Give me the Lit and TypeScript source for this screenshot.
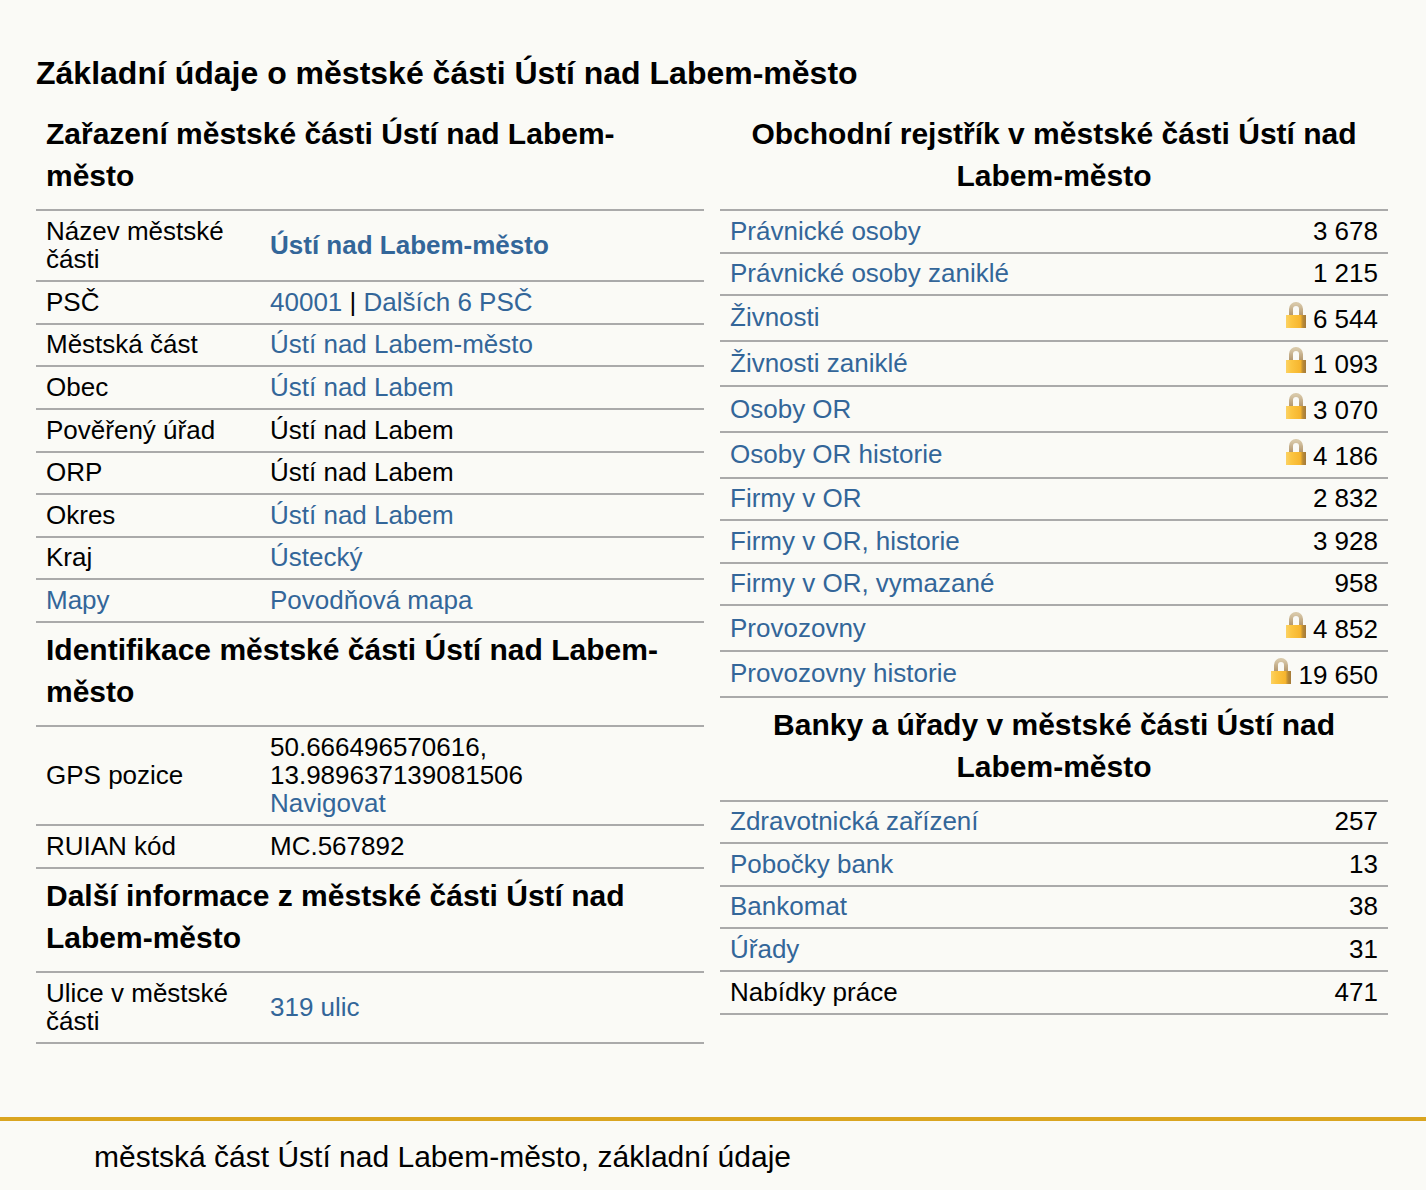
import { LitElement, html, css } from "lit";
import { customElement } from "lit/decorators.js";

const L = (t: string) => html`<a href="#">${t}</a>`;
const lock = html`<svg class="lock" viewBox="0 0 20 26" width="20" height="26" aria-hidden="true">
  <defs>
    <linearGradient id="g" x1="0" x2="1" y1="0" y2="0"><stop offset="0" stop-color="#fbd264"/><stop offset=".25" stop-color="#fcc642"/><stop offset=".72" stop-color="#f6b52e"/><stop offset=".85" stop-color="#b98a35"/><stop offset="1" stop-color="#a47a3a"/></linearGradient>
    <linearGradient id="s" x1="0" x2="0" y1="0" y2="1"><stop offset="0" stop-color="#d8c8a8"/><stop offset="1" stop-color="#b0936a"/></linearGradient>
  </defs>
  <path d="M5 14V7a5 5 0 0 1 10 0V14" fill="none" stroke="url(#s)" stroke-width="4"/>
  <rect x="0" y="13" width="20" height="13" fill="url(#g)"/></svg>`;

const left1: [any, any][] = [
  ["Název městské části", html`<a href="#"><b>Ústí nad Labem-město</b></a>`],
  ["PSČ", html`${L("40001")} | ${L("Dalších 6 PSČ")}`],
  ["Městská část", L("Ústí nad Labem-město")],
  ["Obec", L("Ústí nad Labem")],
  ["Pověřený úřad", "Ústí nad Labem"],
  ["ORP", "Ústí nad Labem"],
  ["Okres", L("Ústí nad Labem")],
  ["Kraj", L("Ústecký")],
  [L("Mapy"), L("Povodňová mapa")],
];
const left2: [any, any][] = [
  ["GPS pozice", html`50.666496570616, 13.989637139081506<br />${L("Navigovat")}`],
  ["RUIAN kód", "MC.567892"],
];
const left3: [any, any][] = [["Ulice v městské části", L("319 ulic")]];
const right1: [string, string, boolean][] = [
  ["Právnické osoby", "3 678", false],
  ["Právnické osoby zaniklé", "1 215", false],
  ["Živnosti", "6 544", true],
  ["Živnosti zaniklé", "1 093", true],
  ["Osoby OR", "3 070", true],
  ["Osoby OR historie", "4 186", true],
  ["Firmy v OR", "2 832", false],
  ["Firmy v OR, historie", "3 928", false],
  ["Firmy v OR, vymazané", "958", false],
  ["Provozovny", "4 852", true],
  ["Provozovny historie", "19 650", true],
];
const right2: [any, string][] = [
  [L("Zdravotnická zařízení"), "257"],
  [L("Pobočky bank"), "13"],
  [L("Bankomat"), "38"],
  [L("Úřady"), "31"],
  ["Nabídky práce", "471"],
];

@customElement("app-root")
export class AppRoot extends LitElement {
  static styles = css`
    :host {
      display: block;
      height: 1190px;
      background: #fafaf6;
      color: #000;
      font-family: "Liberation Sans", Arial, sans-serif;
      font-size: 26px;
      line-height: 28.4px;
      overflow: hidden;
    }
    h1 {
      margin: 0;
      padding: 55px 36px 0;
      font-size: 32px;
      line-height: 37px;
      font-weight: 700;
    }
    .cols {
      display: grid;
      grid-template-columns: 668px 668px;
      column-gap: 16px;
      padding: 0 38px 0 36px;
      margin-top: 15px;
    }
    h2 {
      margin: 0;
      padding: 6px 10px 12px;
      font-size: 30px;
      line-height: 42px;
      font-weight: 700;
    }
    h2:first-child { padding-bottom: 12.2px; }
    .center { text-align: center; }
    h2.center:first-child { padding-bottom: 12px; }
    table {
      width: 100%;
      border-collapse: collapse;
      table-layout: fixed;
      border-bottom: 2px solid #aaa;
    }
    tr { border-top: 2px solid #aaa; }
    td { padding: 5.7px 10px 6.5px; vertical-align: middle; }
    .k { width: 204px; }
    .num { text-align: right; white-space: nowrap; }
    a { color: #336699; text-decoration: none; }
    .lock { margin-right: 7px; }
    footer {
      position: absolute;
      top: 1117px;
      left: 0;
      right: 0;
      border-top: 4px solid #daa520;
      padding: 20px 94px;
      font-size: 30px;
      line-height: 32px;
    }
  `;

  private kv(rows: [any, any][]) {
    return html`<table>
      ${rows.map(([k, v]) => html`<tr><td class="k">${k}</td><td>${v}</td></tr>`)}
    </table>`;
  }

  render() {
    return html`
      <h1>Základní údaje o městské části Ústí nad Labem-město</h1>
      <div class="cols">
        <section>
          <h2>Zařazení městské části Ústí nad Labem-město</h2>
          ${this.kv(left1)}
          <h2>Identifikace městské části Ústí nad Labem-město</h2>
          ${this.kv(left2)}
          <h2>Další informace z městské části Ústí nad Labem-město</h2>
          ${this.kv(left3)}
        </section>
        <section>
          <h2 class="center">Obchodní rejstřík v městské části Ústí nad Labem-město</h2>
          <table>
            ${right1.map(([k, v, l]) => html`<tr><td>${L(k)}</td><td class="num">${l ? lock : ""}${v}</td></tr>`)}
          </table>
          <h2 class="center">Banky a úřady v městské části Ústí nad Labem-město</h2>
          <table>
            ${right2.map(([k, v]) => html`<tr><td>${k}</td><td class="num">${v}</td></tr>`)}
          </table>
        </section>
      </div>
      <footer>městská část Ústí nad Labem-město, základní údaje</footer>
    `;
  }
}
